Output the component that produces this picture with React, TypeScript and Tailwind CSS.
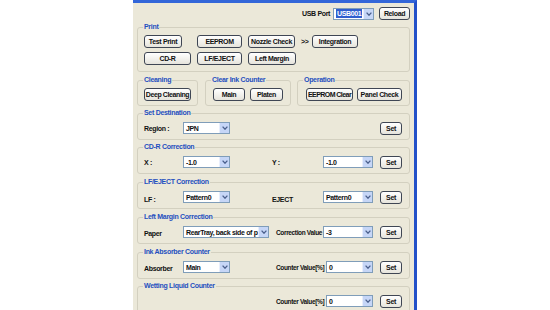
import React from "react";

const FONT = "font-['Liberation_Sans',Arial,sans-serif]";

function Btn({ children, className = "" }: { children: React.ReactNode; className?: string }) {
  return (
    <div
      className={`flex items-center justify-center h-[13px] rounded-[3px] border border-[#3f4654] bg-gradient-to-b from-white to-[#e6e4dc] text-[7px] font-bold leading-none text-[#111] whitespace-nowrap overflow-hidden ${className}`}
    >
      {children}
    </div>
  );
}

function Sel({ value, className = "", hl = false }: { value: string; className?: string; hl?: boolean }) {
  return (
    <div className={`flex items-stretch h-[12px] bg-white border border-[#7f9db9] ${className}`}>
      <div className="flex-1 flex items-center pl-[2px] pr-[1px] overflow-hidden">
        <span
          className={`text-[7px] font-bold leading-[9px] tracking-[-0.35px] whitespace-nowrap ${
            hl ? "bg-[#2f5fcf] text-white px-[1px] flex-1" : "text-[#111]"
          }`}
        >
          {value}
        </span>
      </div>
      <div className="w-[10px] bg-[#c6d6f7] border-l border-[#e8eefc] flex items-center justify-center">
        <svg width="6" height="4" viewBox="0 0 6 4">
          <path d="M0.6 0.6 L3 3.2 L5.4 0.6" stroke="#4a5f8c" strokeWidth="1.3" fill="none" />
        </svg>
      </div>
    </div>
  );
}

function Group({ title, className = "", children }: { title: string; className?: string; children: React.ReactNode }) {
  return (
    <fieldset className={`border border-[#d3d0c0] rounded-[3px] ${className}`}>
      <legend className="px-[1px] -ml-[1px] text-[7px] leading-[8px] font-bold text-[#1f4fbf] tracking-[-0.3px] whitespace-nowrap">
        {title}
      </legend>
      {children}
    </fieldset>
  );
}

function Label({ children, className = "" }: { children: React.ReactNode; className?: string }) {
  return (
    <span className={`font-bold leading-none text-[#111] tracking-[-0.35px] whitespace-nowrap ${className}`}>
      {children}
    </span>
  );
}

export default function App() {
  return (
    <div className={`w-[550px] h-[310px] bg-white overflow-hidden flex ${FONT}`}>
      <div className="ml-[133px] w-[284px] h-[310px] flex flex-col bg-[#ebe8d9] border-t-[3px] border-t-[#3366d9] border-r-[3px] border-r-[#2250c8] px-[4px] overflow-hidden">
        {/* USB row */}
        <div className="flex items-center justify-end pt-[4px] h-[17px] shrink-0">
          <Label className="text-[7px] mr-[3px]">USB Port</Label>
          <Sel value="USB001" hl className="w-[41px]" />
          <Btn className="w-[31px] ml-[5px] tracking-[-0.35px]">Reload</Btn>
        </div>

        {/* Print */}
        <Group title="Print" className="mt-[3px] px-[6px] shrink-0">
          <div className="flex flex-col gap-[4px] pt-[4px] pb-[6px]">
            <div className="flex items-center">
              <Btn className="w-[38px] tracking-[-0.35px]">Test Print</Btn>
              <Btn className="w-[45px] ml-[15px] tracking-[-0.35px]">EEPROM</Btn>
              <Btn className="w-[47px] ml-[6px] tracking-[-0.35px]">Nozzle Check</Btn>
              <Label className="text-[7px] ml-[6px] w-[7px]">&gt;&gt;</Label>
              <Btn className="w-[46px] ml-[4px] tracking-[-0.35px]">Integration</Btn>
            </div>
            <div className="flex items-center">
              <Btn className="w-[47px] tracking-[-0.35px]">CD-R</Btn>
              <Btn className="w-[45px] ml-[6px] tracking-[-0.35px]">LF/EJECT</Btn>
              <Btn className="w-[48px] ml-[6px] tracking-[-0.35px]">Left Margin</Btn>
            </div>
          </div>
        </Group>

        {/* Cleaning / Clear Ink Counter / Operation */}
        <div className="flex mt-[4px] shrink-0">
          <Group title="Cleaning" className="w-[61px] px-[6px]">
            <div className="flex pt-[4px] pb-[4px]">
              <Btn className="w-[47px] tracking-[-0.4px]">Deep Cleaning</Btn>
            </div>
          </Group>
          <Group title="Clear Ink Counter" className="w-[86px] ml-[7px] px-[6px]">
            <div className="flex justify-center gap-[5px] pt-[4px] pb-[4px]">
              <Btn className="w-[32px] tracking-[-0.35px]">Main</Btn>
              <Btn className="w-[33px] tracking-[-0.35px]">Platen</Btn>
            </div>
          </Group>
          <Group title="Operation" className="w-[113px] ml-[6px] px-[6px]">
            <div className="flex justify-center gap-[4px] pt-[4px] pb-[4px] pl-[1px]">
              <Btn className="w-[47px] tracking-[-0.55px]">EEPROM Clear</Btn>
              <Btn className="w-[45px] tracking-[-0.35px]">Panel Check</Btn>
            </div>
          </Group>
        </div>

        {/* Set Destination */}
        <Group title="Set Destination" className="mt-[3px] pl-[6px] pr-[7px] shrink-0">
          <div className="flex items-center h-[12px] mt-[5px] mb-[5px]">
            <Label className="text-[7px] w-[39px]">Region :</Label>
            <Sel value="JPN" className="w-[47px]" />
            <Btn className="w-[22px] h-[12px] ml-auto tracking-[-0.35px]">Set</Btn>
          </div>
        </Group>

        {/* CD-R Correction */}
        <Group title="CD-R Correction" className="mt-[3px] pl-[6px] pr-[7px] shrink-0">
          <div className="flex items-center h-[12px] mt-[5px] mb-[5px]">
            <Label className="text-[7px] w-[39px]">X :</Label>
            <Sel value="-1.0" className="w-[47px]" />
            <Label className="text-[7px] ml-[42px] w-[51px]">Y :</Label>
            <Sel value="-1.0" className="w-[50px]" />
            <Btn className="w-[22px] h-[12px] ml-auto tracking-[-0.35px]">Set</Btn>
          </div>
        </Group>

        {/* LF/EJECT Correction */}
        <Group title="LF/EJECT Correction" className="mt-[4px] pl-[6px] pr-[7px] shrink-0">
          <div className="flex items-center h-[12px] mt-[5px] mb-[5px]">
            <Label className="text-[7px] w-[39px] mt-[4px]">LF :</Label>
            <Sel value="Pattern0" className="w-[47px]" />
            <Label className="text-[7px] ml-[42px] w-[51px] mt-[4px]">EJECT</Label>
            <Sel value="Pattern0" className="w-[50px]" />
            <Btn className="w-[22px] h-[12px] ml-auto tracking-[-0.35px]">Set</Btn>
          </div>
        </Group>

        {/* Left Margin Correction */}
        <Group title="Left Margin Correction" className="mt-[4px] pl-[6px] pr-[7px] shrink-0">
          <div className="flex items-center h-[12px] mt-[5px] mb-[5px]">
            <Label className="text-[7px] w-[39px] mt-[2px]">Paper</Label>
            <Sel value="RearTray, back side of p" className="w-[86px]" />
            <Label className="text-[6.5px] ml-[7px] w-[47px] mt-[2px]">Correction Value</Label>
            <Sel value="-3" className="w-[50px]" />
            <Btn className="w-[22px] h-[12px] ml-auto tracking-[-0.35px]">Set</Btn>
          </div>
        </Group>

        {/* Ink Absorber Counter */}
        <Group title="Ink Absorber Counter" className="mt-[4px] pl-[6px] pr-[7px] shrink-0">
          <div className="flex items-center h-[12px] mt-[5px] mb-[5px]">
            <Label className="text-[7px] w-[39px] mt-[3px]">Absorber</Label>
            <Sel value="Main" className="w-[47px]" />
            <Label className="text-[6.5px] ml-[46px] w-[50px] mt-[3px]">Counter Value[%]</Label>
            <Sel value="0" className="w-[47px]" />
            <Btn className="w-[22px] h-[12px] ml-auto tracking-[-0.35px]">Set</Btn>
          </div>
        </Group>

        {/* Wetting Liquid Counter */}
        <Group title="Wetting Liquid Counter" className="mt-[3px] pl-[6px] pr-[7px] shrink-0">
          <div className="flex items-center h-[12px] mt-[5px] mb-[5px]">
            <Label className="text-[6.5px] ml-[132px] w-[50px] mt-[3px]">Counter Value[%]</Label>
            <Sel value="0" className="w-[47px]" />
            <Btn className="w-[22px] h-[12px] ml-auto tracking-[-0.35px]">Set</Btn>
          </div>
        </Group>
      </div>
    </div>
  );
}
